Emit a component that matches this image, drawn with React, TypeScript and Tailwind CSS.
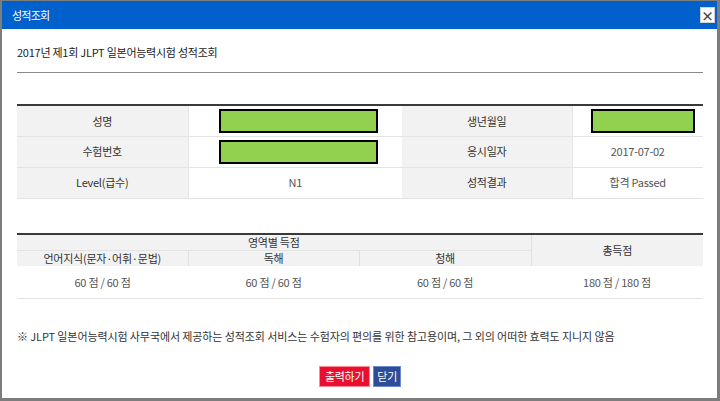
const font = { fontFamily: '"Noto Sans CJK KR", "Noto Sans", sans-serif' };

function GreenBox({ w }: { w: string }) {
  return <div className={`h-[24px] ${w} border-2 border-black bg-[#92d050]`} />;
}

export default function App() {
  return (
    <div
      style={font}
      className="flex h-[401px] w-[720px] flex-col border-t border-r-[3px] border-b-[3px] border-l-2 border-[#7d7d7d] bg-white text-[11px] tracking-[-0.25px] text-[#333]"
    >
      {/* header */}
      <div className="flex h-[28px] shrink-0 items-center justify-between bg-[#0061cc] pr-[2px] pl-[10px]">
        <span className="text-[11px] tracking-[-0.8px] text-white">성적조회</span>
        <button className="flex h-[16px] w-[15px] items-center justify-center border border-[#d0d0d0] bg-white text-[13px] leading-none font-bold text-[#444]">
          ×
        </button>
      </div>

      <div className="pr-[14px] pl-[15px]">
        <p className="mt-[15px] h-[16px] leading-[16px] text-[#222]">
          2017년 제1회 JLPT 일본어능력시험 성적조회
        </p>
        <div className="mt-[12px] border-t border-[#8a8a8a]" />

        {/* personal info */}
        <table className="mt-[31px] w-full table-fixed border-collapse border-t-2 border-[#3a3a3a] text-center">
          <colgroup>
            <col className="w-[171px]" />
            <col className="w-[214px]" />
            <col className="w-[170px]" />
            <col />
          </colgroup>
          <tbody>
            <tr className="h-[31px] border-b border-[#e3e3e3]">
              <td className="bg-[#f2f2f2]">성명</td>
              <td className="border-l border-[#e6e6e6]">
                <div className="flex pl-[30px]">
                  <GreenBox w="w-[159px]" />
                </div>
              </td>
              <td className="bg-[#f2f2f2]">생년월일</td>
              <td className="border-l border-[#e6e6e6]">
                <div className="flex pl-[18px]">
                  <GreenBox w="w-[104px]" />
                </div>
              </td>
            </tr>
            <tr className="h-[31px] border-b border-[#e3e3e3]">
              <td className="bg-[#f2f2f2]">수험번호</td>
              <td className="border-l border-[#e6e6e6]">
                <div className="flex pl-[30px]">
                  <GreenBox w="w-[159px]" />
                </div>
              </td>
              <td className="bg-[#f2f2f2]">응시일자</td>
              <td className="border-l border-[#e6e6e6] text-[#555]">2017-07-02</td>
            </tr>
            <tr className="h-[31px] border-b border-[#e3e3e3]">
              <td className="bg-[#f2f2f2]">Level(급수)</td>
              <td className="border-l border-[#e6e6e6] text-[#555]">N1</td>
              <td className="bg-[#f2f2f2]">성적결과</td>
              <td className="border-l border-[#e6e6e6] text-[#555]">합격 Passed</td>
            </tr>
          </tbody>
        </table>

        {/* scores */}
        <table className="mt-[34px] w-full table-fixed border-collapse border-t-2 border-[#3a3a3a] text-center">
          <colgroup>
            <col className="w-[171px]" />
            <col className="w-[171px]" />
            <col className="w-[172px]" />
            <col />
          </colgroup>
          <tbody>
            <tr className="h-[16px] bg-[#f2f2f2]">
              <td colSpan={3} className="border-b border-[#e3e3e3] leading-[15px]">
                영역별 득점
              </td>
              <td rowSpan={2} className="border-l border-[#e0e0e0]">
                총득점
              </td>
            </tr>
            <tr className="h-[16px] bg-[#f2f2f2]">
              <td className="leading-[15px]">언어지식(문자·어휘·문법)</td>
              <td className="border-l border-[#e0e0e0] leading-[15px]">독해</td>
              <td className="border-l border-[#e0e0e0] leading-[15px]">청해</td>
            </tr>
            <tr className="h-[32px] border-b border-[#e3e3e3] text-[#555]">
              <td>60 점 / 60 점</td>
              <td>60 점 / 60 점</td>
              <td>60 점 / 60 점</td>
              <td>180 점 / 180 점</td>
            </tr>
          </tbody>
        </table>

        <p className="mt-[29px] h-[16px] leading-[16px] tracking-[-0.1px]">
          ※ JLPT 일본어능력시험 사무국에서 제공하는 성적조회 서비스는 수험자의 편의를 위한 참고용이며, 그 외의 어떠한 효력도 지니지 않음
        </p>

        <div className="mt-[22px] flex justify-center gap-[3px]">
          <button className="h-[21px] border border-[#ff8a98] bg-[#e8102e] px-[5px] leading-none text-white">
            출력하기
          </button>
          <button className="h-[21px] border border-[#6d8ccf] bg-[#2c4e96] px-[3px] leading-none text-white">
            닫기
          </button>
        </div>
      </div>
    </div>
  );
}
